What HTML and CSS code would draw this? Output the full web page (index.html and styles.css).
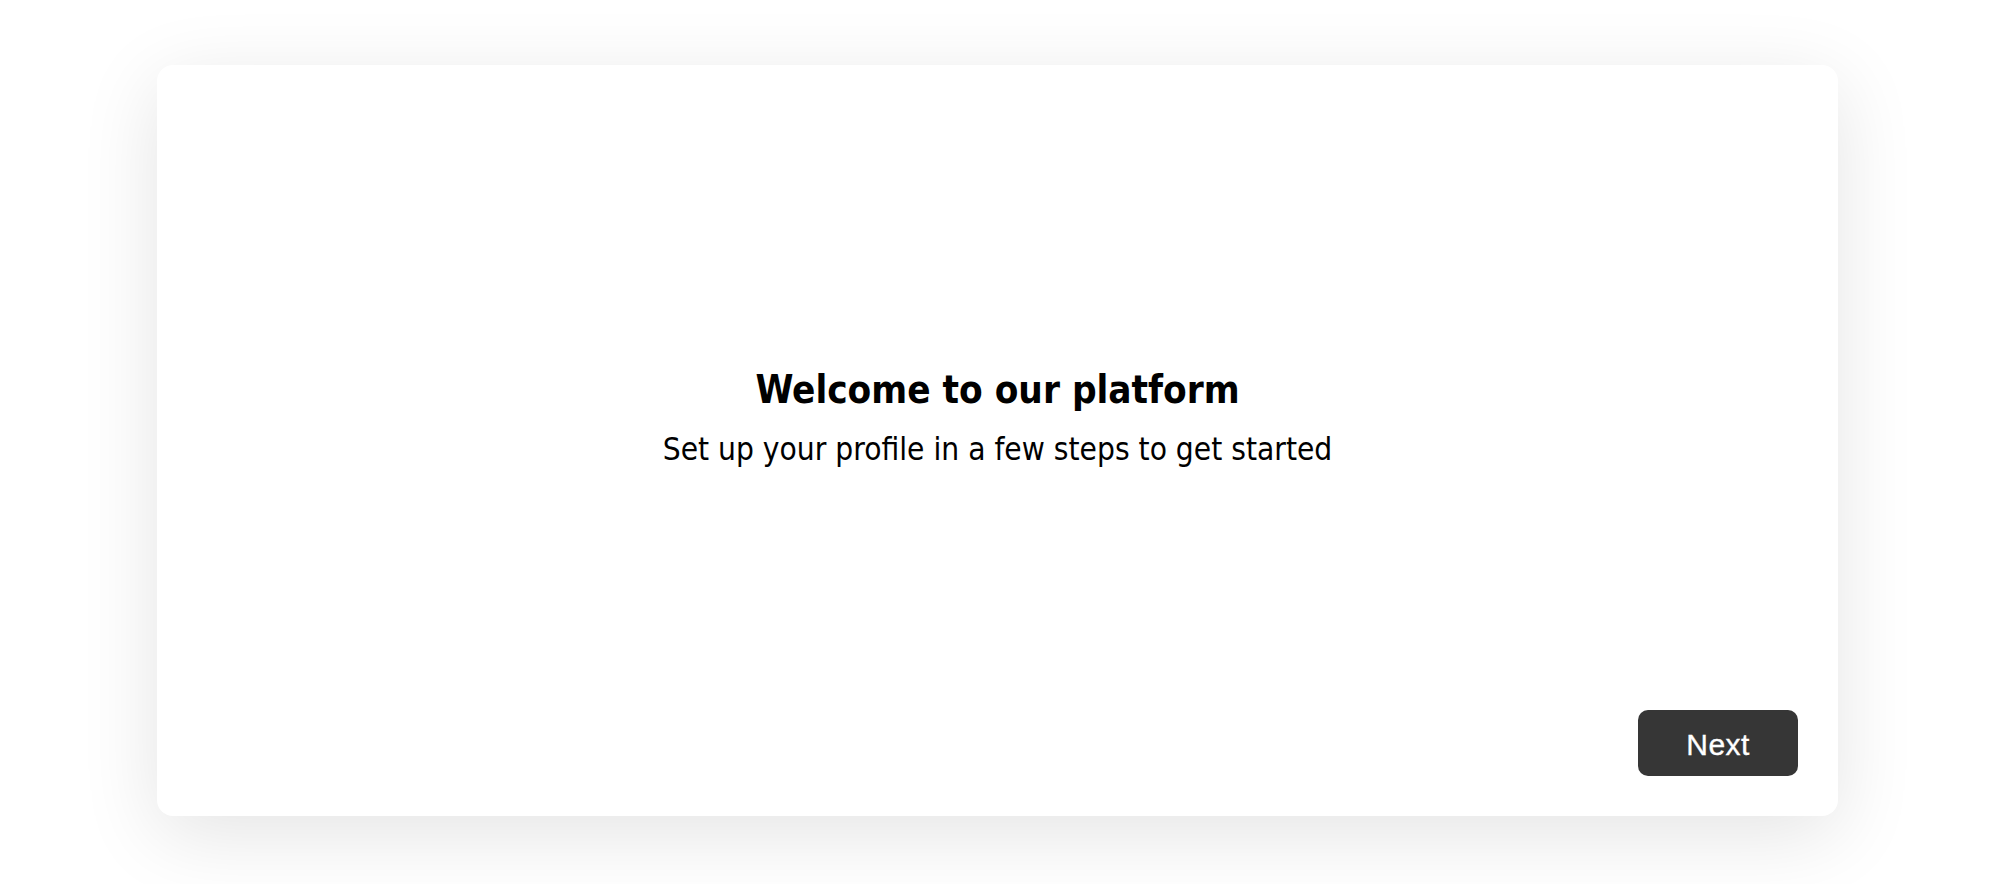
FILE: index.html
```html
<!DOCTYPE html>
<html lang="en">
<head>
<meta charset="utf-8">
<title>Welcome</title>
<link rel="stylesheet" href="styles.css">
</head>
<body>
  <main class="page">
    <section class="card">
      <div class="card-body">
        <h1 class="title">Welcome to our platform</h1>
        <p class="subtitle">Set up your profile in a few steps to get started</p>
      </div>
      <div class="card-footer">
        <button class="btn-next" type="button">Next</button>
      </div>
    </section>
  </main>
</body>
</html>
```
FILE: styles.css
```css
* { box-sizing: border-box; }

html, body {
  margin: 0;
  height: 100%;
  background: #ffffff;
}

.page {
  height: 100%;
  padding: 65px 152px 68px 157px;
  display: flex;
}

.card {
  flex: 1;
  display: flex;
  flex-direction: column;
  background: #ffffff;
  border-radius: 16px;
  padding: 40px;
  box-shadow: 0 18px 80px rgba(0, 0, 0, 0.11);
}

.card-body {
  flex: 1;
  display: flex;
  flex-direction: column;
  align-items: center;
  justify-content: center;
  padding-top: 19px;
  font-family: "DejaVu Sans Condensed", "DejaVu Sans", sans-serif;
  color: #000;
}

.title {
  margin: 0;
  font-size: 38.3px;
  font-weight: bold;
  line-height: normal;
}

.subtitle {
  margin: 19px 0 0;
  font-size: 31.4px;
  font-weight: normal;
  line-height: normal;
}

.card-footer {
  display: flex;
  justify-content: flex-end;
}

.btn-next {
  width: 160px;
  height: 66px;
  padding: 3px 0 0;
  border: none;
  border-radius: 10px;
  background: #363636;
  color: #ffffff;
  font-family: "Liberation Sans", Arial, sans-serif;
  font-size: 30px;
  letter-spacing: 0.4px;
  -webkit-text-stroke: 0.35px #ffffff;
  cursor: pointer;
}
```
